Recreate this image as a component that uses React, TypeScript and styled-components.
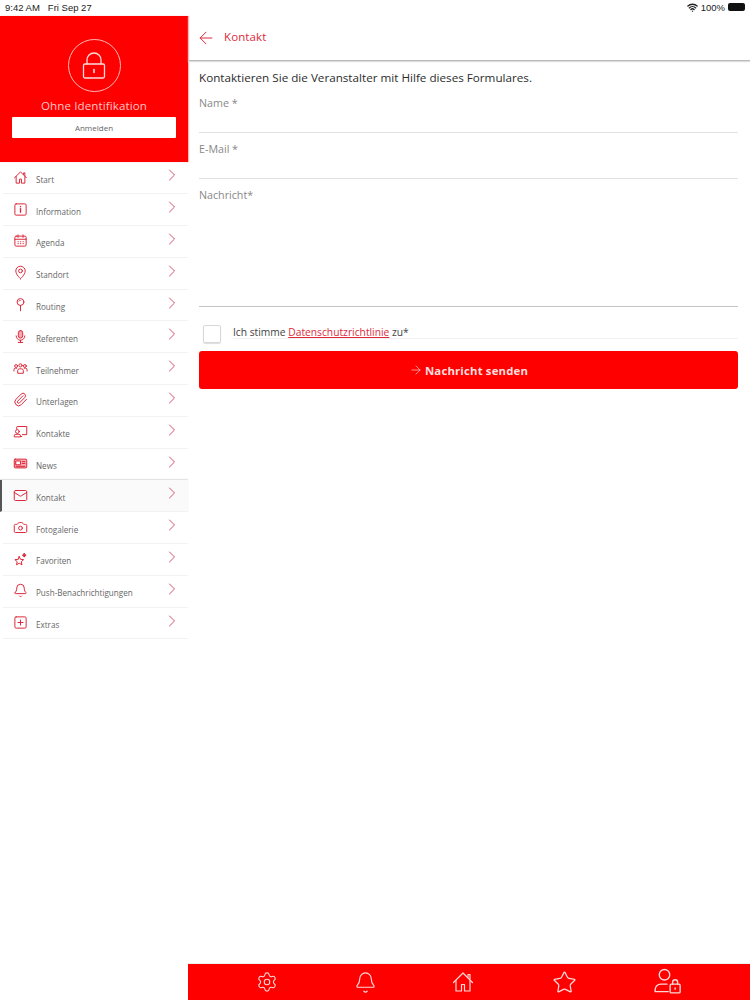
import React from "react";
import styled, { createGlobalStyle } from "styled-components";
import { ArrowLeft, ArrowRight, Bell, Camera, ChevronRight, Mail, Paperclip, Settings, Star, SquarePlus, Wifi } from "lucide-react";

const Global = createGlobalStyle`
  html, body { margin: 0; padding: 0; background: #fff; }
  * { box-sizing: border-box; }
  body { font-family: "Open Sans", "Liberation Sans", sans-serif; }
`;

const Page = styled.div`width: 750px; height: 1000px; display: flex; flex-direction: column; overflow: hidden; background: #fff;`;
const StatusBar = styled.div`
  height: 16px; flex: none; display: flex; align-items: center; justify-content: space-between; padding: 0 5px 2px 5px;
  font-family: "Liberation Sans", sans-serif; font-size: 9.5px; color: #222;
`;
const StatusGroup = styled.div<{ $gap: number }>`display: flex; align-items: center; gap: ${p => p.$gap}px;`;
const Battery = styled.div`width: 17px; height: 8px; background: #111; border-radius: 2px;`;
const Body = styled.div`flex: 1; min-height: 0; display: flex;`;
const Sidebar = styled.aside`width: 188px; flex: none; display: flex; flex-direction: column;`;
const Profile = styled.div`
  height: 146px; flex: none; background: #ff0000; display: flex; flex-direction: column; align-items: center; padding-top: 23px;
  box-shadow: 1px 0 1px #ffb3b3;
`;
const Circle = styled.div`
  width: 53px; height: 53px; border-radius: 50%; border: 1px solid #ffb9b9; display: flex; align-items: center; justify-content: center; color: #ffdcdc;
`;
const ProfileName = styled.div`margin-top: 6px; color: #ffc4c4; font-size: 11.6px; line-height: 16px; letter-spacing: 0.1px;`;
const LoginButton = styled.div`
  margin-top: 3px; width: 164px; height: 21px; background: #fff; border-radius: 1px; color: #666; font-size: 8px;
  display: flex; align-items: center; justify-content: center;
`;
const Menu = styled.nav`display: flex; flex-direction: column; padding-top: 0.5px;`;
const Row = styled.div<{ $active?: boolean }>`
  height: 31.8px; display: flex; align-items: center; padding: 0 10px 1px 10px; margin-left: ${p => p.$active ? 0 : 3}px;
  border-bottom: 1px solid #f2f2f2; background: ${p => p.$active ? "#fafafa" : "#fff"};
  ${p => p.$active ? "border-left: 2px solid #555; padding-left: 11px; box-shadow: 0 -1px 1px #e4e4e4;" : ""}
`;
const RowIcon = styled.span`width: 15px; height: 15px; flex: none; color: #dc2a3c; display: flex; align-items: center; justify-content: center;`;
const RowLabel = styled.span`margin-left: 8px; flex: 1; color: #666; font-size: 8.1px; padding-top: 4px;`;
const Chevron = styled.span`color: #cf3f5c; display: flex; margin-top: -4px; margin-right: -4px;`;

const Main = styled.main`flex: 1; min-width: 0; display: flex; flex-direction: column;`;
const Header = styled.header`
  height: 45px; flex: none; display: flex; align-items: center; padding: 0 0 0 8px; color: #dc2a3c; gap: 8px;
  border-bottom: 1px solid #bbb; box-shadow: 0 1px 1px #ddd;
`;
const HeaderArrow = styled.span`display: flex; margin-top: -1px;`;
const HeaderTitle = styled.span`font-size: 11.5px; margin-top: -3px; letter-spacing: 0.1px;`;
const Content = styled.div`flex: 1; min-height: 0; display: flex; flex-direction: column; padding: 8px 12px 0 11px;`;
const Intro = styled.p`margin: 0; font-size: 11.68px; line-height: 17px; color: #2c2c2c;`;
const Field = styled.div<{ $h: number; $dark?: boolean }>`
  height: ${p => p.$h}px; font-size: 10.7px; line-height: 16px; color: #888; border-bottom: 1px solid ${p => p.$dark ? "#c4c4c4" : "#e2e2e2"};
  margin-top: 8px;
`;
const FirstField = styled(Field)`margin-top: 0; padding-top: 9px;`;
const ConsentRow = styled.div`display: flex; align-items: center; height: 32px; margin-top: 11px; padding-left: 4px;`;
const Box = styled.span`width: 18px; height: 18px; border: 1px solid #d8d8d8; border-radius: 2px; box-shadow: 0 1px 1px #ddd; flex: none;`;
const ConsentText = styled.span`
  margin-left: 12px; font-size: 10.25px; color: #444; flex: 1; border-bottom: 1px solid #f2f2f2; line-height: 14px; margin-top: -4px; height: 14px;
`;
const PolicyLink = styled.a`color: #dc2a3c; text-decoration: underline;`;
const SendButton = styled.div`
  height: 38px; margin-top: 1px; background: #ff0000; border-radius: 3px; color: #ffdede; display: flex; align-items: center; justify-content: center; gap: 2px;
  font-size: 11.4px; font-weight: 700; letter-spacing: 0.15px;
`;
const BottomBar = styled.div`
  height: 36px; flex: none; background: #ff0000; display: flex; align-items: center; color: #ffd8d8; padding-left: 30px;
  box-shadow: 0 -1px 0 #eee;
`;
const BarSlot = styled.span<{ $shift?: number; $lift?: number }>`
  width: 98px; display: flex; align-items: center; justify-content: center; margin-left: ${p => p.$shift ?? 0}px; margin-top: ${p => -(p.$lift ?? 0)}px;
`;

const Svg = ({ children, size = 15, sw = 1.6 }: { children: React.ReactNode; size?: number; sw?: number }) => (
  <svg width={size} height={size} viewBox="0 0 24 24" fill="none" stroke="currentColor" strokeWidth={sw} strokeLinecap="round" strokeLinejoin="round">{children}</svg>
);

const House = ({ size = 15, sw = 1.6 }: { size?: number; sw?: number }) => (
  <Svg size={size} sw={sw}><path d="M2.500 12.500 12 3l9.500 9.500" /><path d="M5 10.500V21h5.500v-6.500h3V21H19V10.500" /><path d="M17 7V4.500h2V9" /></Svg>
);
const LockIcon = () => (
  <svg width={26} height={30} viewBox="0 0 26 30" fill="none" stroke="currentColor" strokeWidth={1.300} strokeLinecap="round" strokeLinejoin="round">
    <rect x="2.500" y="13" width="21" height="14" rx="1.500" />
    <path d="M6 13V9a7 7 0 0 1 14 0v4" />
    <path d="M13 18.500v3" strokeWidth={1.600} />
  </svg>
);
const InfoBox = () => <Svg><rect x="3" y="3" width="18" height="18" rx="2" /><path d="M12 10.500v6" strokeWidth={2.200} /><path d="M12 7v.6" strokeWidth={2.200} /></Svg>;
const Agenda = () => <Svg><rect x="3" y="5" width="18" height="16" rx="2" /><path d="M3 10h18M8 3v4M16 3v4M8 14h.5M12 14h.5M16 14h.5M8 17h.5M12 17h.5M16 17h.5" /></Svg>;
const Pin = () => <Svg><path d="M12 22s7.500-6.500 7.500-12.500a7.500 7.500 0 0 0-15 0C4.500 15.500 12 22 12 22z" /><circle cx="12" cy="9.500" r="3" /></Svg>;
const Routing = () => <Svg><circle cx="12" cy="8" r="5.500" /><path d="M12 13.500V22M9.500 6.500a3 3 0 0 1 2-1" /></Svg>;
const MicIcon = () => <Svg><rect x="8.500" y="2.500" width="7" height="12" rx="3.500" fill="#f6a6ad" /><path d="M5 11a7 7 0 0 0 14 0M12 18v3.500M8.500 21.500h7" /></Svg>;
const Team = () => (
  <Svg size={17}><circle cx="5" cy="8" r="2.300" /><circle cx="12" cy="7" r="2.600" /><circle cx="19" cy="8" r="2.300" /><path d="M1.500 16v-2a2.500 2.500 0 0 1 2.500-2.500h2M22.500 16v-2a2.500 2.500 0 0 0-2.500-2.500h-2M7.500 19v-3.500a3 3 0 0 1 3-3h3a3 3 0 0 1 3 3V19z" /></Svg>
);
const Contacts = () => (
  <Svg size={17}><path d="M6 8V5a1 1 0 0 1 1-1h15v13h-7" /><circle cx="7" cy="12" r="3" /><path d="M2 20v-1a2.500 2.500 0 0 1 2.500-2.500h5A2.500 2.500 0 0 1 12 19v1z" /><path d="M14 20h-2" /></Svg>
);
const News = () => (
  <Svg size={17}><rect x="2" y="5" width="20" height="14" rx="1.500" fill="#f7aab1" /><rect x="5" y="8" width="7" height="6" fill="#fff" /><path d="M15 9h4M15 12h4M5 16.500h14" /></Svg>
);
const Stars = () => <Svg size={16}><path d="M10 8l2 4.500 5 .5-3.700 3.300 1.100 5L10 18.700 5.600 21.300l1.100-5L3 13l5-.5z" /><path d="M18 3l1 2 2 1-2 1-1 2-1-2-2-1 2-1z" fill="currentColor" /></Svg>;
const UserLock = () => (
  <Svg size={30} sw={1.100}><circle cx="10" cy="7" r="4.200" /><path d="M2.500 20.500V19A4.500 4.500 0 0 1 7 14.500h5M2.500 20.500H13" /><rect x="14.500" y="14.500" width="8" height="7" rx="1" /><path d="M16.500 14.500V13a2 2 0 0 1 4 0v1.500M18.500 17.500v1" /></Svg>
);
const Stroke = { strokeWidth: 1.600, size: 15 };

const items: { label: string; icon: React.ReactNode; active?: boolean }[] = [
  { label: "Start", icon: <House /> },
  { label: "Information", icon: <InfoBox /> },
  { label: "Agenda", icon: <Agenda /> },
  { label: "Standort", icon: <Pin /> },
  { label: "Routing", icon: <Routing /> },
  { label: "Referenten", icon: <MicIcon /> },
  { label: "Teilnehmer", icon: <Team /> },
  { label: "Unterlagen", icon: <Paperclip {...Stroke} /> },
  { label: "Kontakte", icon: <Contacts /> },
  { label: "News", icon: <News /> },
  { label: "Kontakt", icon: <Mail {...Stroke} />, active: true },
  { label: "Fotogalerie", icon: <Camera {...Stroke} /> },
  { label: "Favoriten", icon: <Stars /> },
  { label: "Push-Benachrichtigungen", icon: <Bell {...Stroke} /> },
  { label: "Extras", icon: <SquarePlus {...Stroke} /> },
];

export default function App() {
  return (
    <Page>
      <Global />
      <StatusBar>
        <StatusGroup $gap={8}><span>9:42 AM</span><span>Fri Sep 27</span></StatusGroup>
        <StatusGroup $gap={3}><Wifi size={11} strokeWidth={3} /><span>100%</span><Battery /></StatusGroup>
      </StatusBar>
      <Body>
        <Sidebar>
          <Profile>
            <Circle><LockIcon /></Circle>
            <ProfileName>Ohne Identifikation</ProfileName>
            <LoginButton>Anmelden</LoginButton>
          </Profile>
          <Menu>
            {items.map(i => (
              <Row key={i.label} $active={i.active}>
                <RowIcon>{i.icon}</RowIcon>
                <RowLabel>{i.label}</RowLabel>
                <Chevron><ChevronRight size={20} strokeWidth={1.100} /></Chevron>
              </Row>
            ))}
          </Menu>
        </Sidebar>
        <Main>
          <Header>
            <HeaderArrow><ArrowLeft size={20} strokeWidth={1.200} /></HeaderArrow>
            <HeaderTitle>Kontakt</HeaderTitle>
          </Header>
          <Content>
            <Intro>Kontaktieren Sie die Veranstalter mit Hilfe dieses Formulares.</Intro>
            <FirstField $h={47}>Name *</FirstField>
            <Field $h={38}>E-Mail *</Field>
            <Field $h={120} $dark>Nachricht*</Field>
            <ConsentRow>
              <Box />
              <ConsentText>Ich stimme <PolicyLink>Datenschutzrichtlinie</PolicyLink> zu*</ConsentText>
            </ConsentRow>
            <SendButton><ArrowRight size={14} strokeWidth={1.100} />Nachricht senden</SendButton>
          </Content>
          <BottomBar>
            <BarSlot><Settings size={22} strokeWidth={1.200} /></BarSlot>
            <BarSlot><Bell size={23} strokeWidth={1.200} /></BarSlot>
            <BarSlot><House size={24} sw={1.200} /></BarSlot>
            <BarSlot $shift={3}><Star size={25} strokeWidth={1.200} /></BarSlot>
            <BarSlot $shift={5} $lift={3}><UserLock /></BarSlot>
          </BottomBar>
        </Main>
      </Body>
    </Page>
  );
}
